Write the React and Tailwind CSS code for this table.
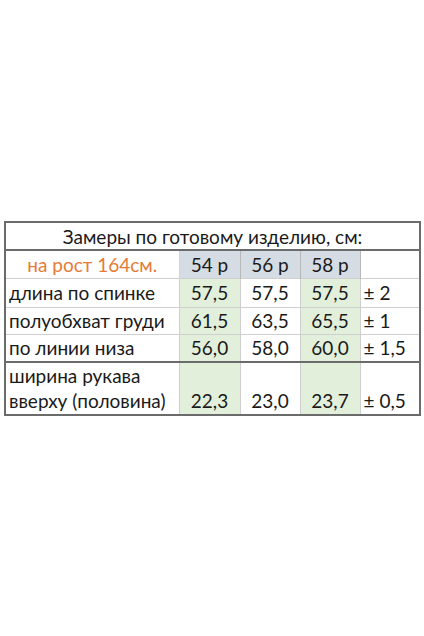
import React from "react";

const rows = [
  { label: "длина по спинке", vals: ["57,5", "57,5", "57,5"], tol: "± 2", h: "h-[29px]" },
  { label: "полуобхват груди", vals: ["61,5", "63,5", "65,5"], tol: "± 1", h: "h-[27px]" },
  { label: "по линии низа", vals: ["56,0", "58,0", "60,0"], tol: "± 1,5", h: "h-[28px]" },
];

const App = () => {
  return (
    <div className="w-[424px] h-[636px] bg-white pt-[221px] pl-[4px] text-[#1a1a1a] font-['Lato',sans-serif] text-[19px] leading-none">
      <table className="w-[415px] border-collapse border-2 border-[#6b6b6b] table-fixed">
        <colgroup>
          <col className="w-[174px]" />
          <col className="w-[61px]" />
          <col className="w-[60px]" />
          <col className="w-[60px]" />
          <col className="w-[60px]" />
        </colgroup>
        <tbody>
          <tr className="h-[28px] border-b-2 border-[#6b6b6b]">
            <td colSpan={5} className="text-center align-middle pt-[1px]">
              Замеры по готовому изделию, см:
            </td>
          </tr>
          <tr className="h-[28px] border-b border-[#cfcfcf]">
            <td className="text-center text-[#e57b36] border-r border-[#d4d4d4]">на рост 164см.</td>
            <td className="text-center bg-[#d6dce4] border-r border-[#b8b8b8]">54 р</td>
            <td className="text-center bg-[#d6dce4] border-r border-[#b8b8b8]">56 р</td>
            <td className="text-center bg-[#d6dce4] border-r border-[#b8b8b8]">58 р</td>
            <td></td>
          </tr>
          {rows.map((r, i) => (
            <tr
              key={r.label}
              className={`${r.h} ${i === rows.length - 1 ? "border-b-2 border-[#6b6b6b]" : "border-b border-[#cfcfcf]"}`}
            >
              <td className="pl-[3px] border-r border-[#cfcfcf]">{r.label}</td>
              <td className="text-center bg-[#e2efda] border-r border-[#cfcfcf]">{r.vals[0]}</td>
              <td className="text-center border-r border-[#cfcfcf]">{r.vals[1]}</td>
              <td className="text-center bg-[#e2efda] border-r border-[#cfcfcf]">{r.vals[2]}</td>
              <td className="pl-[3px]">{r.tol}</td>
            </tr>
          ))}
          <tr className="h-[47px]">
            <td className="pl-[3px] border-r border-[#cfcfcf] align-bottom leading-[25px] pb-[1px]">
              ширина рукава
              <br />
              вверху (половина)
            </td>
            <td className="text-center bg-[#e2efda] border-r border-[#cfcfcf] align-bottom pb-[4px]">22,3</td>
            <td className="text-center border-r border-[#cfcfcf] align-bottom pb-[4px]">23,0</td>
            <td className="text-center bg-[#e2efda] border-r border-[#cfcfcf] align-bottom pb-[4px]">23,7</td>
            <td className="pl-[3px] align-bottom pb-[4px]">± 0,5</td>
          </tr>
        </tbody>
      </table>
    </div>
  );
};

export default App;
